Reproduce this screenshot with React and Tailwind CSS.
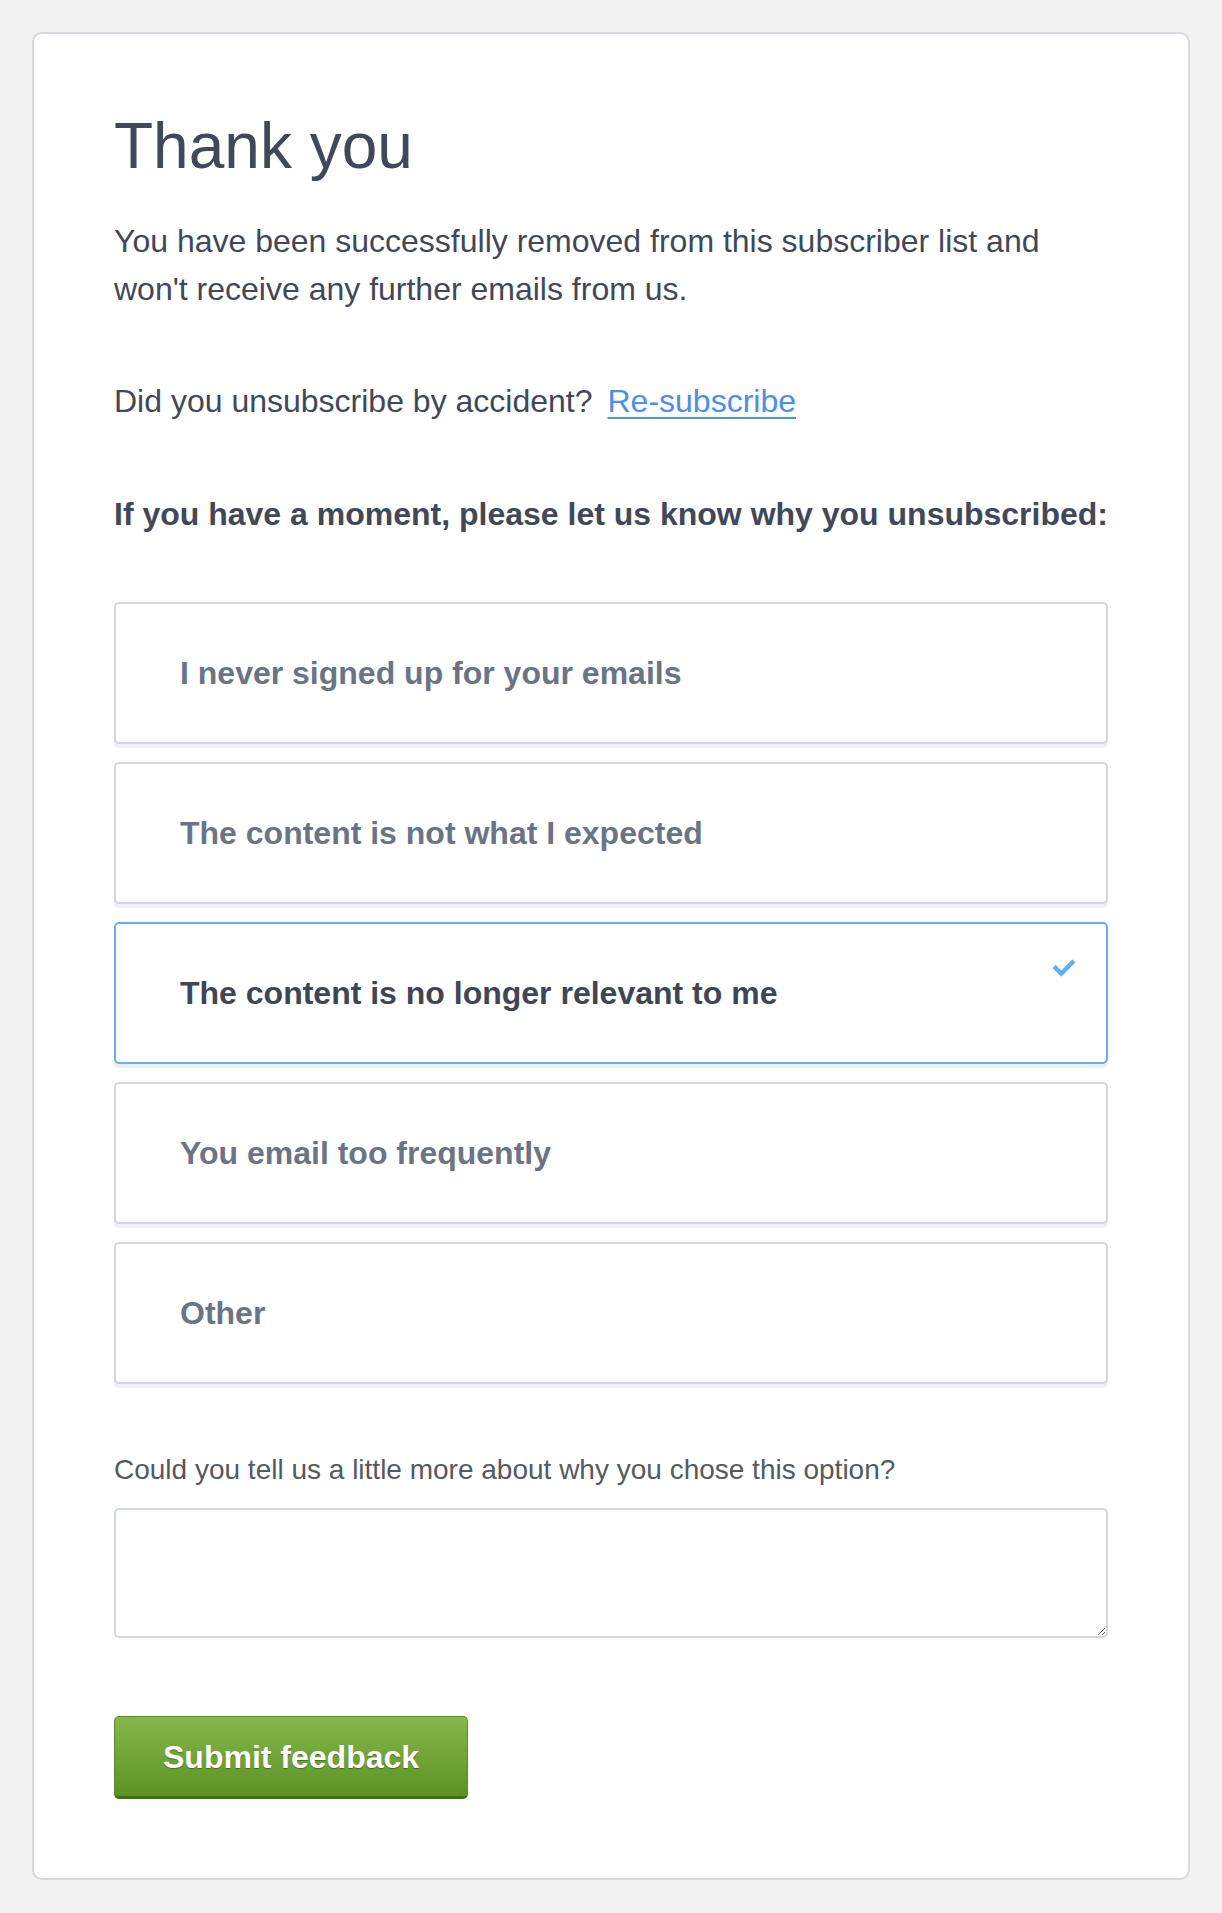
import React from "react";
import { FaCheck } from "react-icons/fa";

const options = [
  { label: "I never signed up for your emails", selected: false },
  { label: "The content is not what I expected", selected: false },
  { label: "The content is no longer relevant to me", selected: true },
  { label: "You email too frequently", selected: false },
  { label: "Other", selected: false },
];

export default function App() {
  return (
    <div
      className="min-h-screen bg-[#f2f2f2] p-8"
      style={{ fontFamily: '"Liberation Sans", Arial, Helvetica, sans-serif' }}
    >
      <div className="rounded-[10px] border-2 border-[#d6d9e0] bg-white px-[80px] pt-[74px] pb-[79px]">
        <h1 className="text-[64px] leading-[76px] font-normal text-[#404859]">
          Thank you
        </h1>
        <p className="mt-[33px] text-[32px] leading-[48px] text-[#404859]">
          You have been successfully removed from this subscriber list and
          won't receive any further emails from us.
        </p>
        <p className="mt-[64px] text-[32px] leading-[48px] text-[#404859]">
          Did you unsubscribe by accident?
          <a
            href="#"
            className="ml-[15px] text-[#4a8ef2] underline decoration-[2px] underline-offset-[5px]"
          >
            Re-subscribe
          </a>
        </p>
        <p className="mt-[65px] text-[32px] leading-[48px] font-bold text-[#404859]">
          If you have a moment, please let us know why you unsubscribed:
        </p>

        <div className="mt-[64px] flex flex-col gap-[18px]">
          {options.map((o) => (
            <div
              key={o.label}
              className={
                o.selected
                  ? "relative flex h-[142px] items-center rounded-[5px] border-2 border-[#63aef6] bg-white pl-[64px] shadow-[0_4px_0_#eef0f4]"
                  : "relative flex h-[142px] items-center rounded-[5px] border-2 border-[#d3d7e0] bg-white pl-[64px] shadow-[0_4px_0_#eef0f4]"
              }
            >
              <span
                className={
                  o.selected
                    ? "text-[32px] leading-[40px] font-bold text-[#3e4656]"
                    : "text-[32px] leading-[40px] font-bold text-[#6b7485]"
                }
              >
                {o.label}
              </span>
              {o.selected && (
                <FaCheck className="absolute right-[31px] top-[33px] h-[22px] w-[22px] text-[#62aef5]" />
              )}
            </div>
          ))}
        </div>

        <p className="mt-[65px] text-[28px] leading-[42px] text-[#555a60]">
          Could you tell us a little more about why you chose this option?
        </p>
        <textarea className="mt-[17px] block h-[130px] w-full rounded-[5px] border-2 border-[#d3d7e0] bg-white p-3 text-[28px] outline-none" />

        <button
          type="button"
          className="mt-[78px] h-[83px] rounded-[5px] border border-b-[3px] border-[#5a8f28] border-b-[#3f6e14] bg-gradient-to-b from-[#86b84a] to-[#5c9224] px-[48px] text-[32px] font-bold text-white [text-shadow:0_1px_1px_rgba(0,0,0,0.35)]"
        >
          Submit feedback
        </button>
      </div>
    </div>
  );
}
